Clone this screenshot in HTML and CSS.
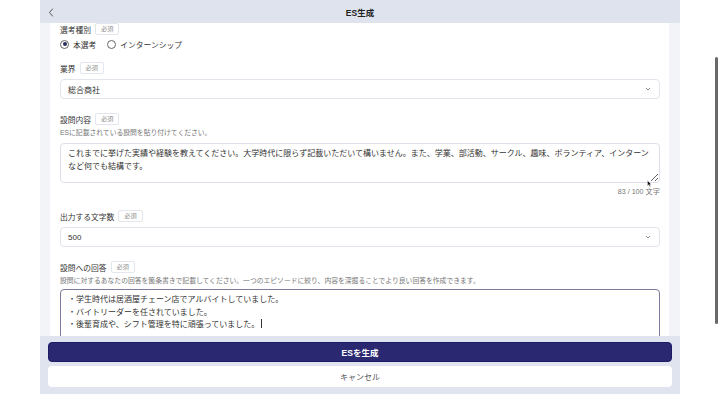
FILE: index.html
```html
<!DOCTYPE html>
<html lang="ja">
<head>
    <meta charset="UTF-8">
    <meta name="viewport" content="width=device-width, initial-scale=1.0">
    <title>ES生成</title>
    <link rel="stylesheet" href="styles.css">
</head>
<body>
    <div class="app">
        <header class="topbar">
            <button class="back" aria-label="戻る">
                <svg width="6" height="9" viewBox="0 0 6 9"><path d="M4.5 1 L1.5 4.5 L4.5 8" fill="none" stroke="#555" stroke-width="1" stroke-linecap="round" stroke-linejoin="round"/></svg>
            </button>
            <h1 class="title">ES生成</h1>
            <span></span>
        </header>

        <div class="scroll">
            <div class="sheet">
                <!-- 選考種別 -->
                <div class="field first">
                    <div class="label-row"><span class="label">選考種別</span><span class="badge">必須</span></div>
                    <div class="radios">
                        <label class="radio"><span class="dot checked"></span>本選考</label>
                        <label class="radio"><span class="dot"></span>インターンシップ</label>
                    </div>
                </div>

                <!-- 業界 -->
                <div class="field">
                    <div class="label-row"><span class="label">業界</span><span class="badge">必須</span></div>
                    <div class="select">
                        <span>総合商社</span>
                        <svg width="6" height="4" viewBox="0 0 6 4"><path d="M1 1 L3 3 L5 1" fill="none" stroke="#777" stroke-width="0.8"/></svg>
                    </div>
                </div>

                <!-- 設問内容 -->
                <div class="field">
                    <div class="label-row"><span class="label">設問内容</span><span class="badge">必須</span></div>
                    <p class="help">ESに記載されている設問を貼り付けてください。</p>
                    <textarea class="textarea" rows="2">これまでに挙げた実績や経験を教えてください。大学時代に限らず記載いただいて構いません。また、学業、部活動、サークル、趣味、ボランティア、インターンなど何でも結構です。</textarea>
                    <div class="counter">83 / 100 文字</div>
                </div>

                <!-- 出力する文字数 -->
                <div class="field">
                    <div class="label-row"><span class="label">出力する文字数</span><span class="badge">必須</span></div>
                    <div class="select">
                        <span>500</span>
                        <svg width="6" height="4" viewBox="0 0 6 4"><path d="M1 1 L3 3 L5 1" fill="none" stroke="#777" stroke-width="0.8"/></svg>
                    </div>
                </div>

                <!-- 設問への回答 -->
                <div class="field">
                    <div class="label-row"><span class="label">設問への回答</span><span class="badge">必須</span></div>
                    <p class="help">設問に対するあなたの回答を箇条書きで記載してください。一つのエピソードに絞り、内容を深掘ることでより良い回答を作成できます。</p>
                    <div class="answer">
                        <div>・学生時代は居酒屋チェーン店でアルバイトしていました。</div>
                        <div>・バイトリーダーを任されていました。</div>
                        <div>・後輩育成や、シフト管理を特に頑張っていました。<span class="caret"></span></div>
                    </div>
                </div>
            </div>
        </div>

        <footer class="footer">
            <button class="btn primary">ESを生成</button>
            <button class="btn cancel">キャンセル</button>
        </footer>
    </div>

    <!-- mouse pointer and page scrollbar -->
    <svg class="pointer" width="5" height="7" viewBox="0 0 5 7"><path d="M0.5 0.5 L0.5 6 L1.8 4.8 L2.8 6.8 L3.6 6.4 L2.7 4.5 L4.4 4.4 Z" fill="#111" stroke="#fff" stroke-width="0.4"/></svg>
    <div class="page-scrollbar"></div>
</body>
</html>
```

FILE: styles.css
```css
html, body {
    margin: 0;
    padding: 0;
    height: 394px;
    overflow: hidden;
    background-color: #fff;
    font-family: "Liberation Sans", "Noto Sans CJK JP", sans-serif;
    color: #333;
}
.app {
    width: 640px;
    height: 394px;
    margin-left: 40px;
    display: flex;
    flex-direction: column;
    background-color: #f3f4f7;
}
.topbar {
    flex: none;
    height: 23px;
    display: grid;
    grid-template-columns: 20px 1fr 20px;
    align-items: center;
    background-color: #dfe3ed;
}
.back {
    border: none;
    background: none;
    padding: 1px 0 0 8px;
    display: flex;
    align-items: center;
}
.title {
    margin: 0;
    text-align: center;
    font-size: 8.5px;
    font-weight: bold;
    color: #222;
}
.scroll {
    flex: 1;
    min-height: 0;
    padding: 0 11px 0 10px;
}
.sheet {
    height: 100%;
    overflow: hidden;
    background-color: #fff;
    padding: 0 9px 0 10px;
    box-sizing: border-box;
}
.field {
    margin-top: 14px;
}
.field.first {
    margin-top: 0;
}
.field.first + .field {
    margin-top: 12px;
}
.label-row {
    height: 12px;
    display: flex;
    align-items: center;
    gap: 4px;
}
.label {
    font-size: 7.75px;
    color: #333;
}
.badge {
    height: 12px;
    box-sizing: border-box;
    padding: 0 5px;
    border: 1px solid #e3e6ec;
    border-radius: 2px;
    font-size: 6.2px;
    line-height: 10px;
    color: #8a8a8a;
}
.radios {
    margin-top: 3px;
    height: 12px;
    display: flex;
    align-items: center;
    gap: 11px;
}
.radio {
    display: flex;
    align-items: center;
    gap: 4px;
    font-size: 7.75px;
    color: #333;
}
.dot {
    width: 9px;
    height: 9px;
    box-sizing: border-box;
    border: 1px solid #666;
    border-radius: 50%;
    display: flex;
    align-items: center;
    justify-content: center;
}
.dot.checked::after {
    content: "";
    width: 4px;
    height: 4px;
    border-radius: 50%;
    background-color: #2b2d5c;
}
.select {
    margin-top: 5px;
    height: 20px;
    box-sizing: border-box;
    border: 1px solid #e1e4eb;
    border-radius: 4px;
    padding: 0 8px 0 7px;
    display: flex;
    align-items: center;
    justify-content: space-between;
    font-size: 8px;
    color: #333;
}
.help {
    margin: 4px 0 0;
    font-size: 6.8px;
    line-height: 8px;
    color: #777;
}
.textarea {
    display: block;
    margin-top: 6px;
    width: 100%;
    height: 40px;
    box-sizing: border-box;
    border: 1px solid #dde0e8;
    border-radius: 4px;
    padding: 2.5px 7px;
    font-family: inherit;
    font-size: 8px;
    line-height: 13px;
    color: #333;
    resize: vertical;
    overflow: hidden;
}
.counter {
    margin-top: 5px;
    text-align: right;
    font-size: 7.2px;
    line-height: 8px;
    color: #777;
}
.counter + .field {
    margin-top: 15px;
}
.answer {
    margin-top: 4px;
    height: 60px;
    box-sizing: border-box;
    border: 1px solid #7c7b9c;
    border-radius: 4px;
    padding: 4px 7px;
    font-size: 8px;
    line-height: 12.5px;
    color: #333;
}
.caret {
    display: inline-block;
    width: 1px;
    height: 9px;
    margin-left: 2px;
    vertical-align: -1px;
    background-color: #333;
}
.footer {
    flex: none;
    height: 58px;
    box-sizing: border-box;
    padding: 6px 8px 0;
    display: flex;
    flex-direction: column;
    gap: 4px;
    background-color: #e0e4ee;
}
.btn {
    width: 100%;
    border-radius: 4px;
    font-family: inherit;
    font-size: 8px;
    padding: 0;
    cursor: pointer;
}
.btn.primary {
    height: 20px;
    border: 1px solid #1d1a66;
    background-color: #2b2872;
    color: #fff;
    font-weight: bold;
    font-size: 8.5px;
}
.btn.cancel {
    height: 21px;
    border: none;
    background-color: #fff;
    color: #555;
}
.pointer {
    position: absolute;
    left: 647px;
    top: 180px;
}
.page-scrollbar {
    position: absolute;
    left: 715px;
    top: 57px;
    width: 3px;
    height: 267px;
    border-radius: 1.5px;
    background-color: #6a6a6a;
}
```
